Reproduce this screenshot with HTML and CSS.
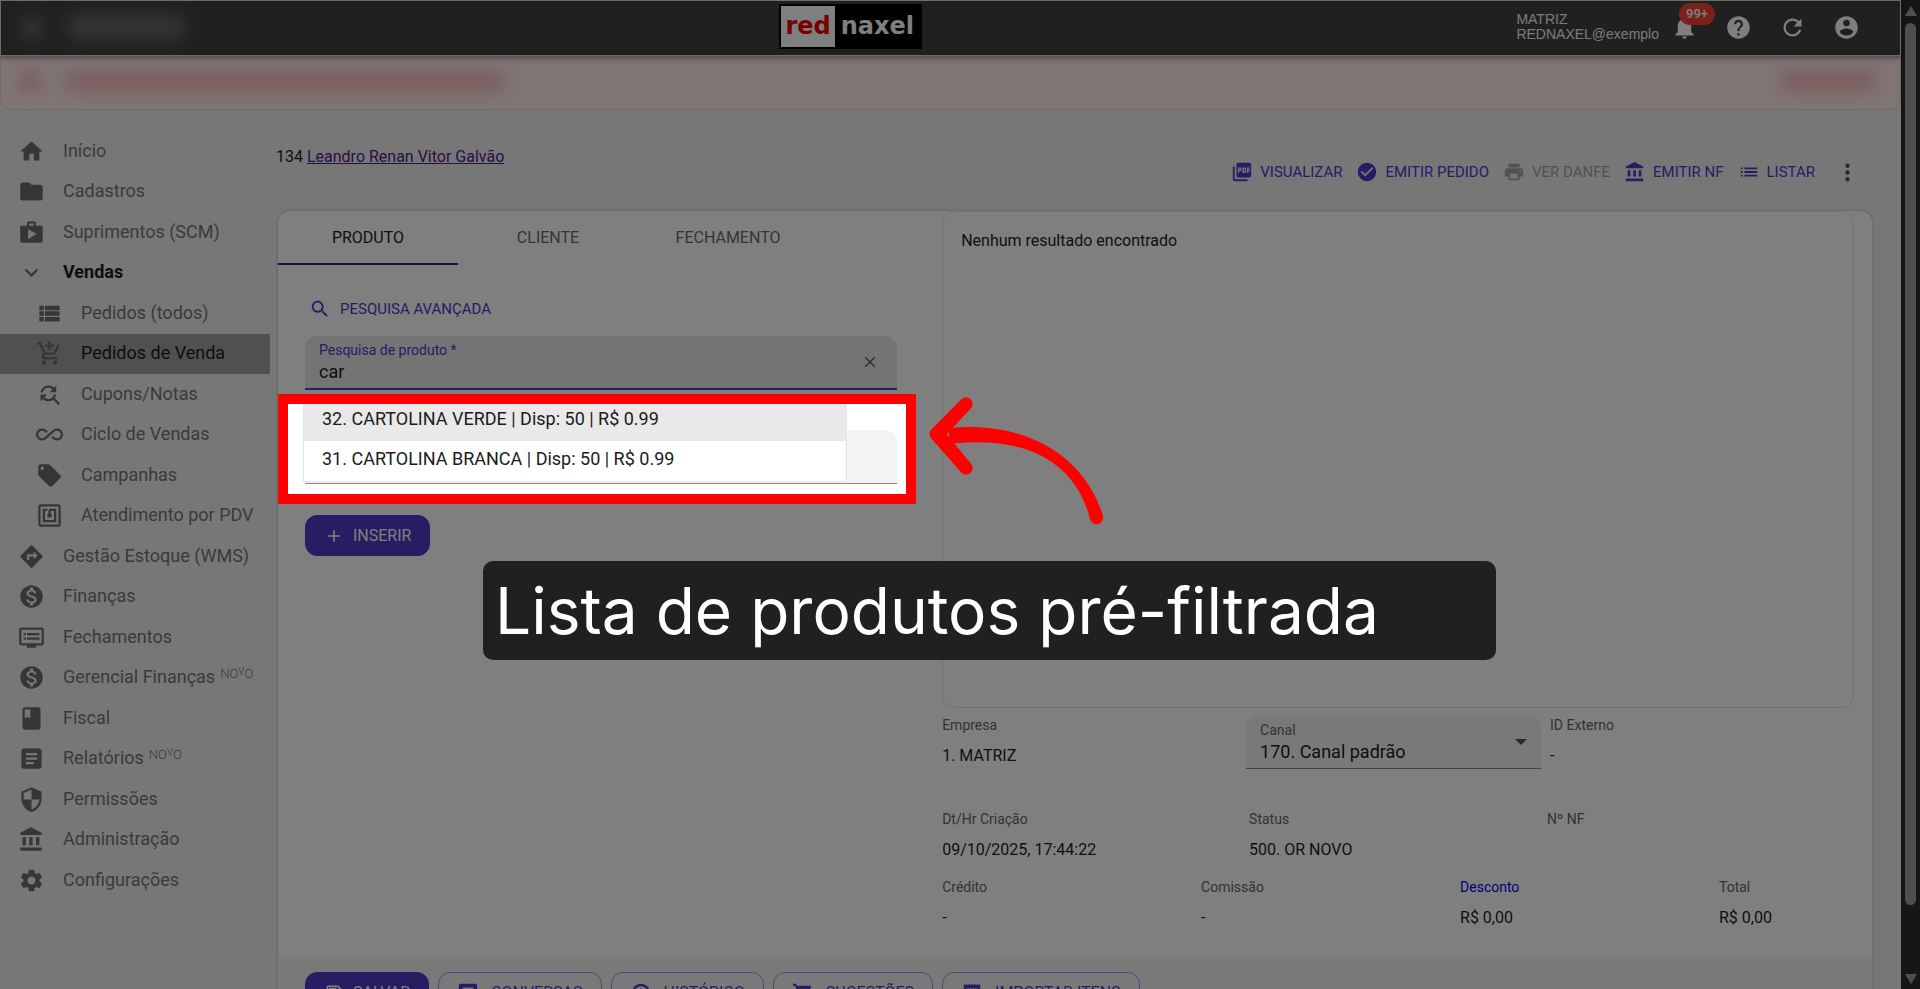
FILE: index.html
```html
<!DOCTYPE html>
<html lang="pt-BR">
<head>
<meta charset="utf-8">
<meta name="viewport" content="width=device-width, initial-scale=1">
<title>Rednaxel - Pedidos de Venda</title>
<link rel="stylesheet" href="styles.css">
</head>
<body>
<svg class="sprite" aria-hidden="true">
  <symbol id="home" viewBox="0 0 24 24"><path d="M10 20v-6h4v6h5v-8h3L12 3 2 12h3v8z"/></symbol>
  <symbol id="folder" viewBox="0 0 24 24"><path d="M10 4H4c-1.100 0-1.990.9-1.990 2L2 18c0 1.100.9 2 2 2h16c1.100 0 2-.9 2-2V8c0-1.100-.9-2-2-2h-8l-2-2z"/></symbol>
  <symbol id="shop" viewBox="0 0 24 24"><path d="M16 6V4c0-1.110-.89-2-2-2h-4c-1.110 0-2 .89-2 2v2H2v13c0 1.110.89 2 2 2h16c1.110 0 2-.89 2-2V6h-6zm-6-2h4v2h-4V4zM9 18V9l7.500 4L9 18z"/></symbol>
  <symbol id="expand" viewBox="0 0 24 24"><path d="M16.590 8.590 12 13.170 7.410 8.590 6 10l6 6 6-6z"/></symbol>
  <symbol id="viewlist" viewBox="0 0 24 24"><path d="M3 14h4v-4H3v4zm0 5h4v-4H3v4zM3 9h4V5H3v4zm5 5h13v-4H8v4zm0 5h13v-4H8v4zM8 5v4h13V5H8z"/></symbol>
  <symbol id="addcart" viewBox="0 0 24 24"><path d="M11 9h2V6h3V4h-3V1h-2v3H8v2h3v3zm-4 9c-1.100 0-1.990.9-1.990 2S5.900 22 7 22s2-.9 2-2-.9-2-2-2zm10 0c-1.100 0-1.990.9-1.990 2s.89 2 1.990 2 2-.9 2-2-.9-2-2-2zm-9.830-3.250.03-.12.9-1.630h7.450c.75 0 1.410-.41 1.750-1.030l3.860-7.010L19.420 4h-.01l-1.100 2-2.760 5H8.530l-.13-.27L6.160 6l-.95-2-.94-2H1v2h2l3.600 7.590-1.350 2.450c-.16.28-.25.61-.25.96 0 1.100.9 2 2 2h12v-2H7.420c-.13 0-.25-.11-.25-.25z"/></symbol>
  <symbol id="findreplace" viewBox="0 0 24 24"><path d="M11 6c1.380 0 2.630.56 3.540 1.460L12 10h6V4l-2.050 2.050C14.680 4.780 12.930 4 11 4c-3.530 0-6.430 2.610-6.920 6H6.100c.46-2.280 2.480-4 4.900-4zm5.640 9.140c.66-.9 1.120-1.970 1.280-3.140H15.900c-.46 2.280-2.480 4-4.900 4-1.380 0-2.630-.56-3.540-1.460L10 12H4v6l2.050-2.050C7.320 17.220 9.070 18 11 18c1.550 0 2.980-.51 4.140-1.360L20 21.490 21.490 20l-4.850-4.860z"/></symbol>
  <symbol id="infinity" viewBox="0 0 24 24"><path d="M18.600 6.620c-1.440 0-2.800.56-3.770 1.530L12 10.660 10.480 12h.01L7.800 14.390c-.64.64-1.490.99-2.400.99-1.870 0-3.390-1.510-3.390-3.380S3.530 8.620 5.400 8.620c.91 0 1.760.35 2.440 1.030l1.130 1 1.510-1.340L9.220 8.200C8.200 7.180 6.840 6.620 5.400 6.620 2.420 6.620 0 9.040 0 12s2.420 5.380 5.400 5.380c1.440 0 2.800-.56 3.770-1.530l2.830-2.500.01.01L13.520 12h-.01l2.690-2.390c.64-.64 1.490-.99 2.400-.99 1.870 0 3.390 1.510 3.390 3.380s-1.520 3.380-3.390 3.380c-.9 0-1.760-.35-2.440-1.030l-1.140-1.010-1.510 1.340 1.270 1.120c1.020 1.010 2.370 1.570 3.820 1.570 2.980 0 5.400-2.410 5.400-5.380s-2.420-5.370-5.400-5.370z"/></symbol>
  <symbol id="tag" viewBox="0 0 24 24"><path d="m21.410 11.580-9-9C12.050 2.220 11.550 2 11 2H4c-1.100 0-2 .9-2 2v7c0 .55.22 1.050.59 1.420l9 9c.36.36.86.58 1.410.58s1.050-.22 1.410-.59l7-7c.37-.36.59-.86.59-1.410s-.23-1.060-.59-1.420zM5.500 7C4.670 7 4 6.330 4 5.500S4.670 4 5.500 4 7 4.670 7 5.500 6.330 7 5.500 7z"/></symbol>
  <symbol id="nfc" viewBox="0 0 24 24"><path d="M20 2H4c-1.100 0-2 .9-2 2v16c0 1.100.9 2 2 2h16c1.100 0 2-.9 2-2V4c0-1.100-.9-2-2-2zm0 18H4V4h16v16zM18 6h-5c-1.100 0-2 .9-2 2v2.280c-.6.350-1 .980-1 1.720 0 1.100.9 2 2 2s2-.9 2-2c0-.740-.4-1.380-1-1.720V8h3v8H8V8h2V6H6v12h12V6z"/></symbol>
  <symbol id="directions" viewBox="0 0 24 24"><path d="m21.710 11.290-9-9c-.39-.39-1.020-.39-1.410 0l-9 9c-.39.39-.39 1.020 0 1.410l9 9c.39.39 1.020.39 1.410 0l9-9c.39-.38.39-1.010 0-1.410zM14 14.500V12h-4v3H8v-4c0-.55.45-1 1-1h5V7.500l3.500 3.500-3.500 3.500z"/></symbol>
  <symbol id="money" viewBox="0 0 24 24"><path d="M12 2C6.480 2 2 6.480 2 12s4.480 10 10 10 10-4.480 10-10S17.520 2 12 2zm1.410 16.090V20h-2.670v-1.930c-1.710-.36-3.160-1.460-3.270-3.400h1.960c.1 1.050.82 1.870 2.650 1.870 1.960 0 2.400-.98 2.400-1.590 0-.83-.44-1.610-2.670-2.140-2.480-.6-4.180-1.620-4.180-3.670 0-1.720 1.390-2.840 3.110-3.210V4h2.670v1.950c1.860.45 2.790 1.860 2.850 3.390H14.300c-.05-1.110-.64-1.870-2.220-1.870-1.500 0-2.400.68-2.400 1.640 0 .84.65 1.390 2.670 1.910s4.180 1.390 4.180 3.910c-.01 1.830-1.380 2.830-3.120 3.160z"/></symbol>
  <symbol id="dvr" viewBox="0 0 24 24"><path d="M21 3H3c-1.100 0-2 .9-2 2v12c0 1.100.9 2 2 2h5v2h8v-2h5c1.100 0 1.990-.9 1.990-2L23 5c0-1.100-.9-2-2-2zm0 14H3V5h18v12zm-2-9H8v2h11V8zm0 4H8v2h11v-2zM7 8H5v2h2V8zm0 4H5v2h2v-2z"/></symbol>
  <symbol id="book" viewBox="0 0 24 24"><path d="M18 2H6c-1.100 0-2 .9-2 2v16c0 1.100.9 2 2 2h12c1.100 0 2-.9 2-2V4c0-1.100-.9-2-2-2zM6 4h5v8l-2.500-1.500L6 12V4z"/></symbol>
  <symbol id="article" viewBox="0 0 24 24"><path d="M19 3H5c-1.100 0-2 .9-2 2v14c0 1.100.9 2 2 2h14c1.100 0 2-.9 2-2V5c0-1.100-.9-2-2-2zm-5 14H7v-2h7v2zm3-4H7v-2h10v2zm0-4H7V7h10v2z"/></symbol>
  <symbol id="shield" viewBox="0 0 24 24"><path d="M12 1 3 5v6c0 5.550 3.840 10.740 9 12 5.160-1.260 9-6.450 9-12V5l-9-4zm0 10.990h7c-.53 4.120-3.280 7.790-7 8.940V12H5V6.300l7-3.110v8.800z"/></symbol>
  <symbol id="bank" viewBox="0 0 24 24"><path d="M4 10v7h3v-7H4zm6 0v7h3v-7h-3zM2 22h19v-3H2v3zm14-12v7h3v-7h-3zm-4.500-9L2 6v2h19V6l-9.500-5z"/></symbol>
  <symbol id="gear" viewBox="0 0 24 24"><path d="M19.140 12.940c.04-.3.060-.61.060-.94 0-.32-.02-.64-.07-.94l2.030-1.580c.18-.14.230-.41.120-.61l-1.920-3.320c-.12-.22-.37-.29-.59-.22l-2.390.96c-.5-.38-1.030-.7-1.620-.94l-.36-2.540c-.04-.24-.24-.41-.48-.41h-3.840c-.24 0-.43.17-.47.41l-.36 2.540c-.59.24-1.130.57-1.620.94l-2.390-.96c-.22-.08-.47 0-.59.22L2.740 8.870c-.12.21-.08.470.12.610l2.030 1.580c-.05.3-.09.630-.09.940s.02.640.07.940l-2.030 1.580c-.18.14-.23.41-.12.61l1.920 3.320c.12.22.370.29.590.22l2.390-.96c.5.380 1.030.7 1.620.94l.36 2.540c.05.240.240.410.480.410h3.840c.24 0 .440-.17.470-.41l.36-2.540c.59-.24 1.130-.56 1.620-.94l2.390.96c.22.080.470 0 .590-.22l1.920-3.320c.12-.22.070-.47-.12-.61l-2.010-1.580zM12 15.600c-1.980 0-3.600-1.620-3.600-3.600s1.620-3.600 3.600-3.600 3.600 1.620 3.600 3.600-1.620 3.600-3.600 3.600z"/></symbol>
  <symbol id="bell" viewBox="0 0 24 24"><path d="M12 22c1.100 0 2-.9 2-2h-4c0 1.100.89 2 2 2zm6-6v-5c0-3.070-1.640-5.640-4.500-6.320V4c0-.83-.67-1.500-1.500-1.500s-1.500.67-1.500 1.500v.68C7.630 5.360 6 7.920 6 11v5l-2 2v1h16v-1l-2-2z"/></symbol>
  <symbol id="help" viewBox="0 0 24 24"><path d="M12 2C6.480 2 2 6.480 2 12s4.480 10 10 10 10-4.480 10-10S17.520 2 12 2zm1 17h-2v-2h2v2zm2.070-7.750-.9.920C13.450 12.900 13 13.500 13 15h-2v-.5c0-1.100.45-2.100 1.170-2.830l1.240-1.260c.37-.36.59-.86.59-1.410 0-1.100-.9-2-2-2s-2 .9-2 2H8c0-2.210 1.790-4 4-4s4 1.790 4 4c0 .88-.36 1.680-.93 2.250z"/></symbol>
  <symbol id="refresh" viewBox="0 0 24 24"><path d="M17.650 6.350C16.200 4.900 14.210 4 12 4c-4.420 0-7.990 3.580-7.990 8s3.570 8 7.990 8c3.730 0 6.840-2.550 7.730-6h-2.080c-.82 2.330-3.040 4-5.650 4-3.310 0-6-2.690-6-6s2.690-6 6-6c1.660 0 3.140.69 4.220 1.780L13 11h7V4l-2.350 2.350z"/></symbol>
  <symbol id="account" viewBox="0 0 24 24"><path d="M12 2C6.480 2 2 6.480 2 12s4.480 10 10 10 10-4.480 10-10S17.520 2 12 2zm0 3c1.660 0 3 1.340 3 3s-1.340 3-3 3-3-1.340-3-3 1.340-3 3-3zm0 14.200c-2.500 0-4.710-1.280-6-3.220.03-1.990 4-3.080 6-3.080 1.990 0 5.970 1.090 6 3.080-1.290 1.940-3.500 3.220-6 3.220z"/></symbol>
  <symbol id="pdf" viewBox="0 0 24 24"><path d="M20 2H8c-1.100 0-2 .9-2 2v12c0 1.100.9 2 2 2h12c1.100 0 2-.9 2-2V4c0-1.100-.9-2-2-2zm-8.500 7.500c0 .83-.67 1.500-1.500 1.500H9v2H7.500V7H10c.83 0 1.500.67 1.500 1.500v1zm5 2c0 .83-.67 1.500-1.500 1.500h-2.500V7H15c.83 0 1.500.67 1.500 1.500v3zm4-3H19v1h1.500V11H19v2h-1.500V7h3v1.500zM9 9.500h1v-1H9v1zM4 6H2v14c0 1.100.9 2 2 2h14v-2H4V6zm10 5.500h1v-3h-1v3z"/></symbol>
  <symbol id="check" viewBox="0 0 24 24"><path d="M12 2C6.480 2 2 6.480 2 12s4.480 10 10 10 10-4.480 10-10S17.520 2 12 2zm-2 15-5-5 1.410-1.410L10 14.170l7.590-7.590L19 8l-9 9z"/></symbol>
  <symbol id="print" viewBox="0 0 24 24"><path d="M19 8H5c-1.660 0-3 1.340-3 3v6h4v4h12v-4h4v-6c0-1.660-1.340-3-3-3zm-3 11H8v-5h8v5zm3-7c-.55 0-1-.45-1-1s.45-1 1-1 1 .45 1 1-.45 1-1 1zm-1-9H6v4h12V3z"/></symbol>
  <symbol id="list" viewBox="0 0 24 24"><path d="M3 13h2v-2H3v2zm0 4h2v-2H3v2zm0-8h2V7H3v2zm4 4h14v-2H7v2zm0 4h14v-2H7v2zM7 7v2h14V7H7z"/></symbol>
  <symbol id="dots" viewBox="0 0 24 24"><path d="M12 8c1.100 0 2-.9 2-2s-.9-2-2-2-2 .9-2 2 .9 2 2 2zm0 2c-1.100 0-2 .9-2 2s.9 2 2 2 2-.9 2-2-.9-2-2-2zm0 6c-1.100 0-2 .9-2 2s.9 2 2 2 2-.9 2-2-.9-2-2-2z"/></symbol>
  <symbol id="search" viewBox="0 0 24 24"><path d="M15.500 14h-.79l-.28-.27C15.410 12.590 16 11.110 16 9.500 16 5.910 13.090 3 9.500 3S3 5.910 3 9.500 5.910 16 9.500 16c1.610 0 3.090-.59 4.230-1.570l.27.28v.79l5 4.990L20.490 19l-4.990-5zm-6 0C7.010 14 5 11.990 5 9.500S7.010 5 9.500 5 14 7.010 14 9.500 11.990 14 9.500 14z"/></symbol>
  <symbol id="close" viewBox="0 0 24 24"><path d="M19 6.200 17.800 5 12 10.800 6.200 5 5 6.200l5.800 5.800L5 17.800 6.200 19l5.800-5.800 5.800 5.800 1.200-1.200-5.800-5.800z"/></symbol>
  <symbol id="plus" viewBox="0 0 24 24"><path d="M19 13h-6v6h-2v-6H5v-2h6V5h2v6h6v2z"/></symbol>
  <symbol id="save" viewBox="0 0 24 24"><path d="M17 3H5c-1.110 0-2 .9-2 2v14c0 1.100.89 2 2 2h14c1.100 0 2-.9 2-2V7l-4-4zm2 16H5V5h11.170L19 7.830V19zm-7-7c-1.660 0-3 1.340-3 3s1.340 3 3 3 3-1.340 3-3-1.340-3-3-3zM6 6h9v4H6z"/></symbol>
  <symbol id="chat" viewBox="0 0 24 24"><path d="M20 2H4c-1.100 0-2 .9-2 2v18l4-4h14c1.100 0 2-.9 2-2V4c0-1.100-.9-2-2-2zM6 9h12v2H6V9zm8 5H6v-2h8v2zm4-6H6V6h12v2z"/></symbol>
  <symbol id="clock" viewBox="0 0 24 24"><path d="M12 2C6.500 2 2 6.500 2 12s4.500 10 10 10 10-4.500 10-10S17.500 2 12 2zm0 17.500a7.500 7.500 0 1 1 0-15 7.500 7.500 0 0 1 0 15zM12.800 7H11v6l4.500 2.700.8-1.300-3.500-2.200z"/></symbol>
  <symbol id="cart" viewBox="0 0 24 24"><path d="M7 18c-1.100 0-2 .9-2 2s.9 2 2 2 2-.9 2-2-.9-2-2-2zM1 2v2h2l3.600 7.590-1.350 2.450C4.520 15.370 5.480 17 7 17h12v-2H7.420l.68-2h7.450c.75 0 1.410-.41 1.750-1.030l3.580-6.490A1 1 0 0 0 20 4H5.210l-.94-2H1zm16 16c-1.100 0-2 .9-2 2s.9 2 2 2 2-.9 2-2-.9-2-2-2z"/></symbol>
  <symbol id="receipt" viewBox="0 0 24 24"><path d="M19.500 3.500 18 2l-1.500 1.500L15 2l-1.500 1.500L12 2l-1.500 1.500L9 2 7.500 3.500 6 2 4.500 3.500 3 2v20l1.500-1.500L6 22l1.500-1.500L9 22l1.500-1.500L12 22l1.500-1.500L15 22l1.500-1.500L18 22l1.500-1.500L21 22V2l-1.500 1.500zM18 17H6v-2h12v2zm0-4H6v-2h12v2zm0-4H6V7h12v2z"/></symbol>
</svg>

<div class="window">
  <div class="app">
    <header class="topbar">
      <div class="masked"><span class="blob blob-icon"></span><span class="blob blob-title"></span></div>
      <a class="logo" href="#"><span class="logo-red">red</span><span class="logo-rest">naxel</span></a>
      <div class="session">
        <div class="tenant">MATRIZ<br>REDNAXEL@exemplo</div>
        <button class="round bell-button" aria-label="Notificações"><svg class="icon"><use href="#bell"/></svg><span class="badge">99+</span></button>
        <button class="round" aria-label="Ajuda"><svg class="icon"><use href="#help"/></svg></button>
        <button class="round" aria-label="Atualizar"><svg class="icon"><use href="#refresh"/></svg></button>
        <button class="round" aria-label="Conta"><svg class="icon"><use href="#account"/></svg></button>
      </div>
    </header>
    <div class="alert"><span class="blob blob-pink blob-icon"></span><span class="blob blob-pink blob-message"></span><span class="blob blob-pink blob-action"></span></div>

    <div class="body">
      <nav class="sidebar">
        <ul class="menu">
          <li><a class="item" href="#"><svg class="icon"><use href="#home"/></svg>Início</a></li>
          <li><a class="item" href="#"><svg class="icon"><use href="#folder"/></svg>Cadastros</a></li>
          <li><a class="item" href="#"><svg class="icon"><use href="#shop"/></svg>Suprimentos (SCM)</a></li>
          <li><a class="item open" href="#"><svg class="icon"><use href="#expand"/></svg>Vendas</a></li>
          <li><a class="item sub" href="#"><svg class="icon"><use href="#viewlist"/></svg>Pedidos (todos)</a></li>
          <li><a class="item sub current" href="#"><svg class="icon"><use href="#addcart"/></svg>Pedidos de Venda</a></li>
          <li><a class="item sub" href="#"><svg class="icon"><use href="#findreplace"/></svg>Cupons/Notas</a></li>
          <li><a class="item sub" href="#"><svg class="icon"><use href="#infinity"/></svg>Ciclo de Vendas</a></li>
          <li><a class="item sub" href="#"><svg class="icon"><use href="#tag"/></svg>Campanhas</a></li>
          <li><a class="item sub" href="#"><svg class="icon"><use href="#nfc"/></svg>Atendimento por PDV</a></li>
          <li><a class="item" href="#"><svg class="icon"><use href="#directions"/></svg>Gestão Estoque (WMS)</a></li>
          <li><a class="item" href="#"><svg class="icon"><use href="#money"/></svg>Finanças</a></li>
          <li><a class="item" href="#"><svg class="icon"><use href="#dvr"/></svg>Fechamentos</a></li>
          <li><a class="item" href="#"><svg class="icon"><use href="#money"/></svg>Gerencial Finanças<span class="new">NO<small>V</small>O</span></a></li>
          <li><a class="item" href="#"><svg class="icon"><use href="#book"/></svg>Fiscal</a></li>
          <li><a class="item" href="#"><svg class="icon"><use href="#article"/></svg>Relatórios<span class="new">NO<small>V</small>O</span></a></li>
          <li><a class="item" href="#"><svg class="icon"><use href="#shield"/></svg>Permissões</a></li>
          <li><a class="item" href="#"><svg class="icon"><use href="#bank"/></svg>Administração</a></li>
          <li><a class="item" href="#"><svg class="icon"><use href="#gear"/></svg>Configurações</a></li>
        </ul>
      </nav>

      <main class="main">
        <div class="head">
          <div class="customer">134 <a href="#">Leandro Renan Vitor Galvão</a></div>
          <div class="tools">
            <button class="tool"><svg class="icon"><use href="#pdf"/></svg>VISUALIZAR</button>
            <button class="tool"><svg class="icon"><use href="#check"/></svg>EMITIR PEDIDO</button>
            <button class="tool" disabled><svg class="icon"><use href="#print"/></svg>VER DANFE</button>
            <button class="tool"><svg class="icon"><use href="#bank"/></svg>EMITIR NF</button>
            <button class="tool"><svg class="icon"><use href="#list"/></svg>LISTAR</button>
            <button class="more" aria-label="Mais opções"><svg class="icon"><use href="#dots"/></svg></button>
          </div>
        </div>

        <section class="card">
          <div class="columns">
            <div class="left">
              <div class="tabs" role="tablist">
                <button class="tab active" role="tab" aria-selected="true">PRODUTO</button>
                <button class="tab" role="tab">CLIENTE</button>
                <button class="tab" role="tab">FECHAMENTO</button>
              </div>
              <form class="search">
                <button type="button" class="tool advanced"><svg class="icon"><use href="#search"/></svg>PESQUISA AVANÇADA</button>
                <div class="lookup">
                  <div class="field focused">
                    <div class="field-text">
                      <label for="product">Pesquisa de produto *</label>
                      <input id="product" type="text" value="car">
                    </div>
                    <button type="button" class="clear" aria-label="Limpar"><svg class="icon"><use href="#close"/></svg></button>
                  </div>
                  <div class="options" role="listbox">
                    <div class="option hovered" role="option" aria-selected="true">32. CARTOLINA VERDE | Disp: 50 | R$ 0.99</div>
                    <div class="option" role="option" aria-selected="false">31. CARTOLINA BRANCA | Disp: 50 | R$ 0.99</div>
                  </div>
                  <div class="spotlight"></div>
                </div>
                <input class="field quantity" type="text" aria-label="Quantidade">
                <button type="button" class="primary"><svg class="icon"><use href="#plus"/></svg>INSERIR</button>
              </form>
            </div>

            <div class="right">
              <div class="results">Nenhum resultado encontrado</div>
              <div class="row row-company">
                <dl class="info"><dt>Empresa</dt><dd>1. MATRIZ</dd></dl>
                <div class="field channel">
                  <div class="field-text">
                    <label for="channel">Canal</label>
                    <select id="channel"><option>170. Canal padrão</option></select>
                  </div>
                  <span class="caret"></span>
                </div>
                <dl class="info"><dt>ID Externo</dt><dd>-</dd></dl>
              </div>
              <div class="row row-status">
                <dl class="info"><dt>Dt/Hr Criação</dt><dd>09/10/2025, 17:44:22</dd></dl>
                <dl class="info"><dt>Status</dt><dd>500. OR NOVO</dd></dl>
                <dl class="info"><dt>Nº NF</dt><dd></dd></dl>
              </div>
              <div class="row row-totals">
                <dl class="info"><dt>Crédito</dt><dd>-</dd></dl>
                <dl class="info"><dt>Comissão</dt><dd>-</dd></dl>
                <dl class="info link"><dt>Desconto</dt><dd>R$ 0,00</dd></dl>
                <dl class="info"><dt>Total</dt><dd>R$ 0,00</dd></dl>
              </div>
            </div>
          </div>
          <footer class="actions">
            <button class="primary"><svg class="icon"><use href="#save"/></svg>SALVAR</button>
            <button class="outlined"><svg class="icon"><use href="#chat"/></svg>CONVERSAS</button>
            <button class="outlined"><svg class="icon"><use href="#clock"/></svg>HISTÓRICO</button>
            <button class="outlined"><svg class="icon"><use href="#cart"/></svg>SUGESTÕES</button>
            <button class="outlined"><svg class="icon"><use href="#receipt"/></svg>IMPORTAR ITENS</button>
          </footer>
        </section>
      </main>
    </div>
  </div>
  <div class="scrollbar"><span class="arrow-up"></span><span class="thumb"></span><span class="arrow-down"></span></div>
</div>

<svg class="pointer" viewBox="0 0 180 136" aria-hidden="true">
  <path class="pointer-head" d="M43 12 13 42 43 76"/>
  <path class="pointer-head" d="M43 12 15 42 43 76"/>
  <path class="pointer-tail" d="M26 36C118 28 166 76 180 124A6.300 6.300 0 0 1 167 127C154 74 108 42 26 52Z"/>
</svg>
<div class="caption">Lista de produtos pré-filtrada</div>
</body>
</html>
```

FILE: styles.css
```css
* { box-sizing: border-box; }

body {
  margin: 0;
  height: 100vh;
  overflow: hidden;
  position: relative;
  background: #efefef;
  color: #1c1c1c;
  font: 16px/20px Roboto, "Noto Sans", sans-serif;
}

button, input, select { font: inherit; color: inherit; background: none; border: 0; padding: 0; margin: 0; }
input:focus { outline: 0; }
.sprite { position: absolute; width: 0; height: 0; }
.icon { width: 27px; height: 27px; fill: currentColor; flex: none; display: block; }

.window { display: flex; height: 100vh; overflow: hidden; }
.app { flex: 1; min-width: 0; display: flex; flex-direction: column; }

/* Top bar */
.topbar {
  display: grid;
  grid-template-columns: auto 1fr auto;
  align-items: center;
  height: 56px;
  flex: none;
  padding: 0 40px 2px 0;
  background: #414141;
  border: 1px solid #d6dada;
  box-shadow: 0 2px 5px rgba(0, 0, 0, .4);
  color: #fff;
  position: relative;
  z-index: 1;
}
.masked { display: flex; align-items: center; gap: 24px; padding-left: 20px; }
.blob { display: block; border-radius: 10px; background: #fff; opacity: .2; filter: blur(8px); }
.blob-icon { width: 22px; height: 24px; }
.blob-title { width: 118px; height: 26px; }
.logo {
  display: flex;
  align-items: center;
  justify-self: center;
  padding: 2px;
  margin-bottom: 2px;
  background: #000;
  color: #fff;
  font: 700 24px/41px "DejaVu Sans", sans-serif;
  text-decoration: none;
}
.logo-red { background: #fff; color: #f00000; padding: 0 4px; }
.logo-rest { padding: 0 6px; }
.session { display: flex; align-items: center; justify-content: flex-end; }
.tenant { font: 14px/15px "Liberation Sans", Arial, sans-serif; margin-right: 12px; color: #f4f4f4; }
.round { display: flex; margin-right: 27px; cursor: pointer; }
.round:last-child { margin-right: 0; }
.bell-button { position: relative; }
.badge {
  position: absolute;
  left: 8px;
  top: -11px;
  padding: 0 7px;
  border-radius: 11px;
  background: #f44336;
  font: 500 13px/22px Roboto, sans-serif;
}

.alert {
  display: flex;
  align-items: center;
  gap: 24px;
  height: 54px;
  flex: none;
  padding: 0 24px 4px 18px;
  background: #feeae6;
  border: 1px solid #e2d6d4;
  border-top: 0;
  border-radius: 0 0 12px 12px;
}
.blob-pink { background: #e03040; opacity: .26; }
.blob-message { width: 440px; height: 20px; }
.blob-action { width: 96px; height: 20px; margin-left: auto; }

/* Navigation */
.body { display: flex; flex: 1; min-height: 0; }
.sidebar { width: 270px; flex: none; padding-top: 22px; }
.menu { list-style: none; margin: 0; padding: 0; }
.menu li:nth-child(odd):not(:first-child) { margin-top: 1px; }
.item {
  display: flex;
  align-items: center;
  gap: 18px;
  height: 40px;
  padding: 0 0 2px 18px;
  color: #757575;
  font-size: 18px;
  text-decoration: none;
  white-space: nowrap;
}
.item .icon { fill: #6c6c6c; }
.sub { padding-left: 36px; }
.open { color: #1c1c1c; font-weight: 700; }
.current { background: #a0a0a0; color: #1c1c1c; }
.new { font-size: 13px; font-weight: 300; line-height: 16px; margin: 0 0 6px -13px; }
.new small { font-size: 10px; vertical-align: 3px; line-height: 10px; }

/* Order heading */
.main { flex: 1; min-width: 0; padding: 37px 27px 0 6px; display: flex; flex-direction: column; }
.head { display: flex; justify-content: space-between; align-items: flex-start; padding-bottom: 23px; }
.customer a { color: #551a8b; }
.tools { display: flex; align-items: center; gap: 14px; padding: 11px 13px 0 0; }
.tool {
  display: flex;
  align-items: center;
  gap: 7px;
  height: 28px;
  color: #5038c6;
  font-size: 15px;
  cursor: pointer;
}
.tool .icon { width: 22px; height: 22px; }
.tool:disabled { color: #a4a4a4; }
.more { margin-left: 5px; color: #555; }

/* Order card */
.card {
  flex: 1 0 auto;
  background: #fff;
  border: 2px solid #dedede;
  border-radius: 14px 14px 0 0;
}
.columns { display: grid; grid-template-columns: 5fr 7fr; }
.tabs { display: flex; }
.tab { width: 180px; height: 54px; padding-top: 2px; color: #6a6a6a; border-bottom: 2px solid transparent; }
.tab.active { color: #1c1c1c; border-color: #1f2f93; }
.search { padding: 30px 45px 0 27px; display: flex; flex-direction: column; align-items: flex-start; }
.advanced { margin-left: 4px; gap: 9px; }
.lookup { position: relative; align-self: stretch; margin: 13px 0 40px; }
.field {
  display: flex;
  align-items: center;
  height: 54px;
  width: 100%;
  padding: 0 14px;
  background: #f3f3f3;
  border-bottom: 1px solid #888;
  border-radius: 12px 12px 0 0;
}
.field-text { flex: 1; display: flex; flex-direction: column; }
.field label { color: #666; font-size: 14px; line-height: 20px; }
.field input, .field select { font-size: 18px; line-height: 24px; height: 24px; appearance: none; width: 100%; }
.focused { background: #e8e8e8; border-bottom: 2px solid #5038c6; }
.focused label { color: #5038c6; }
.clear { color: #555; padding: 4px; }
.clear .icon { width: 18px; height: 18px; }
.options {
  position: absolute;
  top: 64px;
  left: -2px;
  right: 50px;
  background: #fff;
  border: 1px solid #e4e4e4;
}
.option { height: 40px; padding: 0 18px; font-size: 18px; line-height: 36px; }
.hovered { background: #e9e9e9; }
.spotlight {
  position: absolute;
  z-index: 5;
  top: 58px;
  left: -27px;
  right: -19px;
  height: 110px;
  border: 10px solid #f00;
  box-shadow: 0 0 0 3000px rgba(0, 0, 0, .5);
}
.primary, .outlined {
  display: flex;
  align-items: center;
  height: 41px;
  padding: 0 18px;
  border: 1px solid #5038c6;
  border-radius: 12px;
  font-size: 16px;
}
.primary { gap: 9px; background: #5038c6; color: #fff; margin-top: 31px; }
.primary .icon { width: 20px; height: 20px; }
.outlined { gap: 12px; color: #5038c6; border-color: #9f8fe6; }
.outlined .icon { width: 22px; height: 22px; }

.right { padding-right: 18px; }
.results {
  height: 497px;
  padding: 19px 18px;
  border: 1px solid #e4e4e4;
  border-radius: 12px;
}
.row { display: grid; }
.row-company { grid-template-columns: 1fr 1fr 1fr; padding-top: 7px; height: 101px; }
.row-status { grid-template-columns: 307fr 298fr 307fr; height: 68px; }
.row-totals { grid-template-columns: 259fr 259fr 259fr 135fr; height: 80px; }
.info { margin: 0; }
.info dt { color: #666; font-size: 14px; }
.info dd { margin: 11px 0 0; }
.link dt { color: #0000ee; }
.channel { width: auto; margin-right: 9px; }
.caret { border: 6px solid transparent; border-top-color: #555; border-bottom: 0; }
.actions { display: flex; gap: 9px; padding: 15px 27px; height: 80px; background: #f3f3f3; }
.actions .primary { margin: 0; }

/* Window scrollbar */
.scrollbar {
  width: 19px;
  flex: none;
  display: flex;
  flex-direction: column;
  align-items: center;
  padding: 6px 0 5px;
  background: #2c2c2c;
}
.thumb { width: 11px; flex: 1; margin: 7px 0 69px; border-radius: 6px; background: #9f9f9f; }
.arrow-up, .arrow-down { border: 6px solid transparent; }
.arrow-up { border-top: 0; border-bottom: 10px solid #9f9f9f; }
.arrow-down { border-bottom: 0; border-top: 10px solid #9f9f9f; }

/* Tutorial annotations */
.pointer { position: absolute; z-index: 6; left: 923px; top: 392px; width: 180px; height: 136px; overflow: visible; }
.pointer-head { fill: none; stroke: #f00; stroke-width: 13; stroke-linecap: round; stroke-linejoin: round; }
.pointer-tail { fill: #f00; }
.caption {
  position: absolute;
  z-index: 6;
  left: 483px;
  top: 561px;
  width: 1013px;
  padding: 0 12px;
  border-radius: 10px;
  background: rgba(31, 31, 31, .99);
  color: #fff;
  font: 64px/99px Inter, sans-serif;
  white-space: nowrap;
}
```
